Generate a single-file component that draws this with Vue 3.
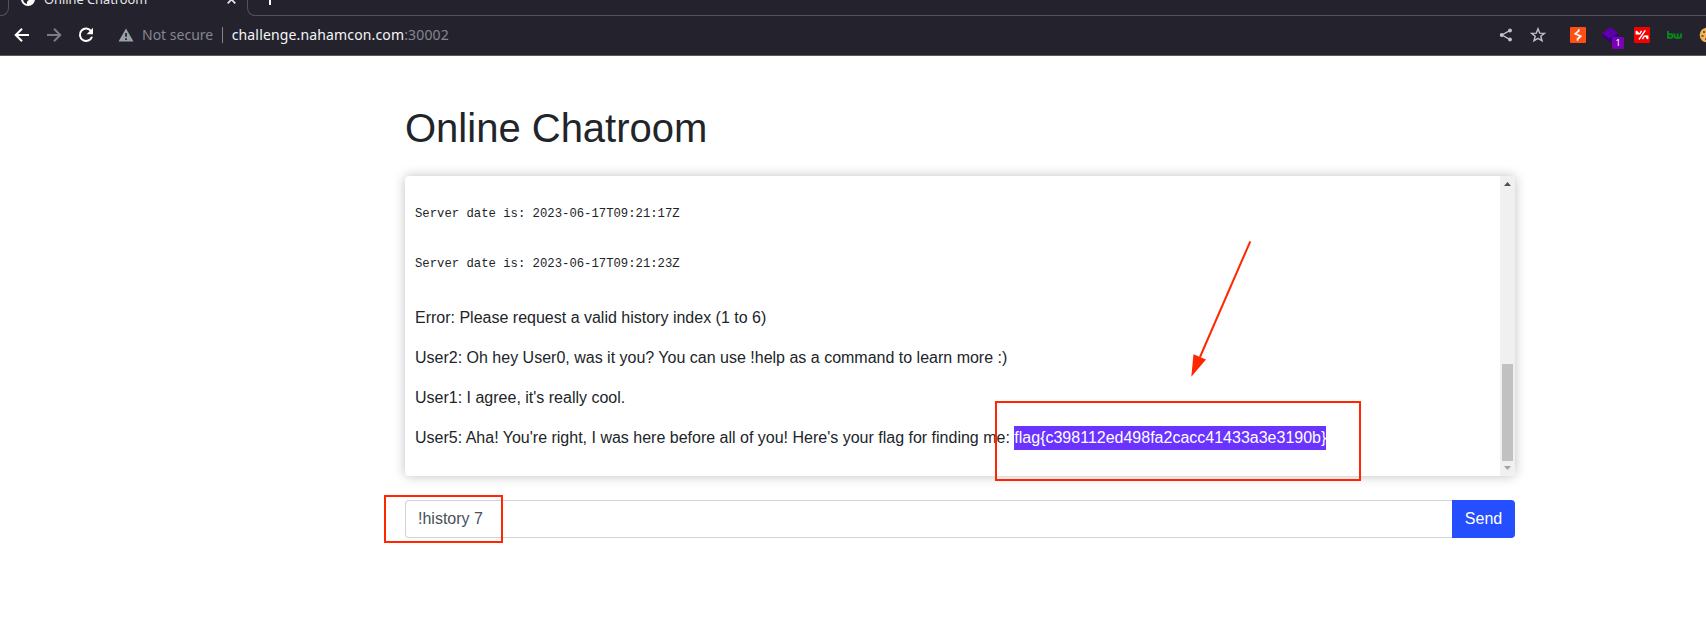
<script setup>
const dates = ['2023-06-17T09:21:17Z', '2023-06-17T09:21:23Z']
const messages = [
  'Error: Please request a valid history index (1 to 6)',
  'User2: Oh hey User0, was it you? You can use !help as a command to learn more :)',
  "User1: I agree, it's really cool.",
]
</script>

<template>
  <div class="page">
    <header class="chrome">
      <div class="tabs">
        <div class="prev-tab"></div>
        <div class="tab">
          <svg class="favicon" width="14" height="14" viewBox="0 0 14 14">
            <circle cx="7" cy="7" r="7" fill="#fff" />
            <path d="M7 1.800C4.200 2 2 4.200 2 7c0 2.600 1.800 4.600 4 5V9.800L8.200 7.500 7 6.500Z" fill="#24232d" />
          </svg>
          <span class="tab-title">Online Chatroom</span>
          <svg class="close" width="9" height="9" viewBox="0 0 9 9"><path d="M.7.7l7.600 7.600M8.300.7L.7 8.300" stroke="#e6e6e8" stroke-width="1.700" /></svg>
        </div>
        <div class="rest">
          <svg width="12" height="12" viewBox="0 0 12 12"><path d="M6 0v12M0 6h12" stroke="#fff" stroke-width="2" /></svg>
        </div>
      </div>
      <div class="toolbar">
        <svg class="nav-icon" width="16" height="16" viewBox="0 0 16 16"><path d="M15 8H2.200M8 1.700L1.700 8 8 14.300" fill="none" stroke="#fff" stroke-width="2" /></svg>
        <svg class="nav-icon" width="16" height="16" viewBox="0 0 16 16"><path d="M1 8h12.800M8 1.700L14.300 8 8 14.300" fill="none" stroke="#7d7c83" stroke-width="2" /></svg>
        <svg class="reload" width="16" height="16" viewBox="0 0 16 16">
          <path d="M13.200 4.200A6.200 6.200 0 1 0 14 9.700" fill="none" stroke="#fff" stroke-width="2" />
          <path d="M15 .8v6.400H8.600Z" fill="#fff" />
        </svg>
        <svg class="warn" width="16" height="14" viewBox="0 0 16 14">
          <path d="M8 .5L15.500 13.500H.5Z" fill="#9aa0a6" />
          <path d="M8 5v3.800M8 10.300v1.800" stroke="#24232d" stroke-width="1.700" />
        </svg>
        <span class="insecure">Not secure</span>
        <span class="url">challenge.nahamcon.com<span class="port">:30002</span></span>
        <div class="extensions">
          <svg class="share" width="14" height="14" viewBox="0 0 14 14">
            <path d="M11 2.400L3 7l8 4.600" fill="none" stroke="#c3c3c7" stroke-width="1.300" />
            <circle cx="11" cy="2.500" r="1.900" fill="#c3c3c7" /><circle cx="2.700" cy="7" r="1.900" fill="#c3c3c7" /><circle cx="11" cy="11.500" r="1.900" fill="#c3c3c7" />
          </svg>
          <svg class="star" width="16" height="16" viewBox="0 0 16 16"><path d="M8 1.800l1.700 4.300 4.600.3-3.500 2.900 1.200 4.500L8 11.300l-4 2.500 1.200-4.500-3.500-2.900 4.600-.3Z" fill="none" stroke="#c3c3c7" stroke-width="1.400" /></svg>
          <svg class="burp" width="16" height="16" viewBox="0 0 16 16">
            <rect width="16" height="16" rx="1" fill="#ff4f12" />
            <path d="M8.700 2.200V4L5.300 6.700 10.700 9.200 7.500 12V13.800" fill="none" stroke="#fff" stroke-width="1.700" />
          </svg>
          <div class="cube">
            <svg width="16" height="16" viewBox="0 0 16 16">
              <path d="M0 6.500V9.500L9 15.500 16 10V7Z" fill="#360079" /><path d="M8.500 0L16 6 7.500 11.500 0 6.500Z" fill="#5c00aa" />
            </svg>
            <span class="count">1</span>
          </div>
          <svg class="red" width="16" height="16" viewBox="0 0 16 16">
            <rect width="16" height="16" rx="1" fill="#f40000" />
            <path d="M2.300 4V6.800H5.800L7.500 3.800M13.700 12V9.200H10.200L8.500 12.200" fill="none" stroke="#fff" stroke-width="1.400" />
            <path d="M2.300 4L5 7M13.700 12L11.500 8.700M11.300 3.300L5 12.500" fill="none" stroke="#fff" stroke-width="1.400" />
          </svg>
          <svg class="bw" width="15" height="8" viewBox="0 0 15 8">
            <path d="M1 0v6.800h3.300Q5.500 6.800 5.500 5T4.300 3.200H1M7.500 2.500v3q0 1.300 1.500 1.300h3.500q1.500 0 1.500-1.300v-3M10.700 2.500v4" fill="none" stroke="#0b861c" stroke-width="1.900" />
          </svg>
          <svg class="cookie" width="16" height="16" viewBox="0 0 16 16">
            <circle cx="8" cy="8" r="7.300" fill="#efb35a" />
            <path d="M4 4h2v2H4ZM2.500 8h2v2h-2ZM6 11h2v2H6Z" fill="#81502c" />
          </svg>
        </div>
      </div>
    </header>

    <main class="container">
      <h1>Online Chatroom</h1>
      <section class="chat">
        <div class="log">
          <pre v-for="d in dates" :key="d">Server date is: {{ d }}</pre>
          <p v-for="m in messages" :key="m">{{ m }}</p>
          <p>User5: Aha! You're right, I was here before all of you! Here's your flag for finding me: <span class="flag">flag{c398112ed498fa2cacc41433a3e3190b}</span></p>
        </div>
        <div class="scrollbar">
          <svg width="7" height="4" viewBox="0 0 7 4"><path d="M0 4L3.500 0 7 4Z" fill="#505050" /></svg>
          <div class="thumb"></div>
          <svg width="7" height="4" viewBox="0 0 7 4"><path d="M0 0L3.500 4 7 0Z" fill="#a3a3a3" /></svg>
        </div>
      </section>
      <div class="composer">
        <div class="field">!history 7</div>
        <button class="send">Send</button>
      </div>
    </main>

    <svg class="annotations" width="1706" height="643" viewBox="0 0 1706 643">
      <g fill="none" stroke="#ff2600" stroke-width="2">
        <rect x="385" y="496" width="117" height="46" />
        <rect x="996" y="402" width="364" height="78" />
        <path d="M1250.300 241.300L1200 357" />
      </g>
      <path d="M1191.300 376.700L1193.500 354.200 1206 359.500Z" fill="#ff2600" />
    </svg>
  </div>
</template>

<style>
body { margin: 0; background: #fff; }
</style>

<style scoped>
* { box-sizing: border-box; }
svg { display: block; flex: none; }
.page { position: relative; width: 1706px; height: 643px; overflow: hidden; background: #fff; color: #212529; font-family: "Liberation Sans", Arial, sans-serif; font-size: 16px; line-height: 24px; }
.chrome { height: 56px; background: #24232d; border-bottom: 1px solid #5b5a62; font-family: "Noto Sans", sans-serif; overflow: hidden; }
.tabs { display: flex; height: 16px; }
.prev-tab { width: 9px; border: solid #53525b; border-width: 0 1px 1px 0; border-bottom-right-radius: 8px; }
.tab { display: flex; width: 238px; padding-left: 12px; }
.favicon { margin-top: -8px; }
.tab-title { margin: -10px 0 0 9px; font-size: 12.800px; line-height: 18px; color: #e8e8eb; width: 169px; white-space: nowrap; }
.close { margin: -5px 0 0 14px; }
.rest { flex: 1; border: solid #53525b; border-width: 0 0 1px 1px; border-bottom-left-radius: 8px; padding-left: 16px; }
.rest svg { margin-top: -7px; }
.toolbar { display: flex; align-items: center; height: 38px; padding-left: 14px; }
.nav-icon { margin-right: 16px; }
.warn { margin-left: 24px; }
.insecure { margin-left: 8px; padding-right: 8.500px; border-right: 1px solid #85848b; font-size: 14px; line-height: 16px; color: #85868f; white-space: nowrap; }
.url { margin-left: 9px; font-size: 14px; letter-spacing: .15px; color: #f5f5f6; }
.port { color: #85868f; }
.extensions { display: flex; align-items: center; width: 207px; margin-left: auto; flex: none; }
.star { margin-left: 17px; }
.burp { margin-left: 24px; }
.cube { position: relative; width: 16px; margin-left: 16px; }
.count { position: absolute; left: 10px; top: 10px; width: 12px; height: 12px; border-radius: 1px; background: #7c00b8; color: #fff; font-size: 9px; line-height: 12px; text-align: center; }
.red { margin-left: 16px; }
.bw { margin-left: 17px; }
.cookie { margin-left: 17px; }
.container { width: 1110px; margin: 0 0 0 405px; padding-top: 48px; }
h1 { margin: 0 0 24px; font-size: 40px; font-weight: 400; line-height: 48px; }
.chat { display: flex; height: 300px; background: #fff; border-radius: 4px; box-shadow: 0 0 12px rgba(0, 0, 0, .25); overflow: hidden; }
.log { flex: 1; display: flex; flex-direction: column; justify-content: flex-end; padding: 10px; }
p { margin: 0 0 16px; white-space: nowrap; }
pre { margin: 0 0 32px; font-family: "Liberation Mono", monospace; font-size: 12.250px; line-height: 18px; }
pre + p { margin-top: 1px; }
.flag { display: inline-block; background: #6a33ff; color: #fff; }
.scrollbar { display: flex; flex-direction: column; align-items: center; width: 15px; padding: 6px 2px; background: #f0f0f0; }
.thumb { width: 11px; height: 97px; margin: auto 0 5px; background: #c1c1c1; }
.composer { display: flex; height: 38px; margin-top: 24px; }
.field { flex: 1; padding: 6px 12px; border: 1px solid #ced4da; border-right: 0; border-radius: 4px 0 0 4px; color: #495057; }
.send { width: 63px; padding: 0; border: 0; border-radius: 0 4px 4px 0; background: #254eff; color: #fff; font: inherit; }
.annotations { position: absolute; left: 0; top: 0; }
</style>
